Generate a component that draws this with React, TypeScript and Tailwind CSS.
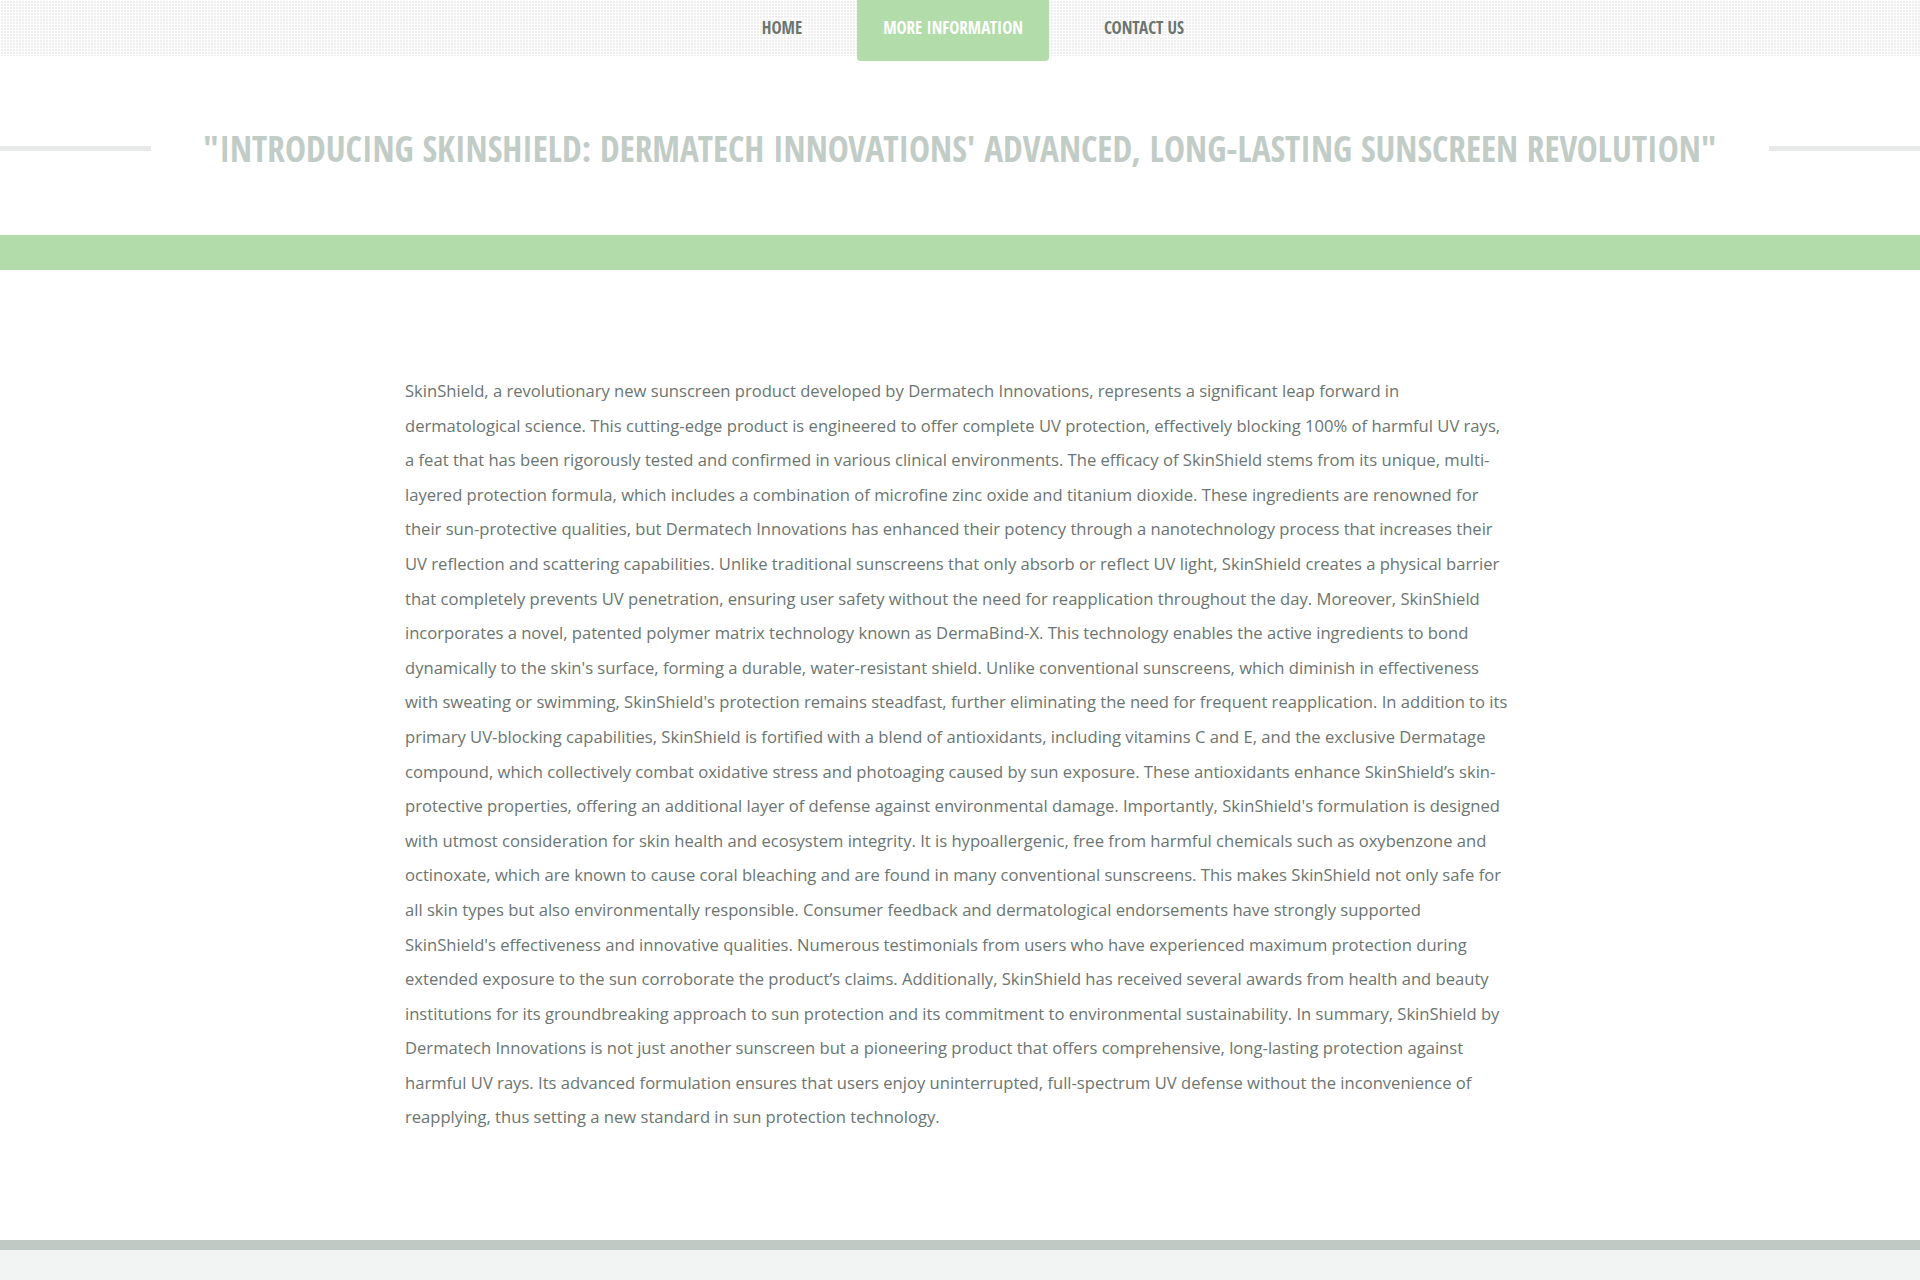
import React from "react";

const paragraph =
  "SkinShield, a revolutionary new sunscreen product developed by Dermatech Innovations, represents a significant leap forward in dermatological science. This cutting-edge product is engineered to offer complete UV protection, effectively blocking 100% of harmful UV rays, a feat that has been rigorously tested and confirmed in various clinical environments. The efficacy of SkinShield stems from its unique, multi-layered protection formula, which includes a combination of microfine zinc oxide and titanium dioxide. These ingredients are renowned for their sun-protective qualities, but Dermatech Innovations has enhanced their potency through a nanotechnology process that increases their UV reflection and scattering capabilities. Unlike traditional sunscreens that only absorb or reflect UV light, SkinShield creates a physical barrier that completely prevents UV penetration, ensuring user safety without the need for reapplication throughout the day. Moreover, SkinShield incorporates a novel, patented polymer matrix technology known as DermaBind-X. This technology enables the active ingredients to bond dynamically to the skin's surface, forming a durable, water-resistant shield. Unlike conventional sunscreens, which diminish in effectiveness with sweating or swimming, SkinShield's protection remains steadfast, further eliminating the need for frequent reapplication. In addition to its primary UV-blocking capabilities, SkinShield is fortified with a blend of antioxidants, including vitamins C and E, and the exclusive Dermatage compound, which collectively combat oxidative stress and photoaging caused by sun exposure. These antioxidants enhance SkinShield\u2019s skin-protective properties, offering an additional layer of defense against environmental damage. Importantly, SkinShield's formulation is designed with utmost consideration for skin health and ecosystem integrity. It is hypoallergenic, free from harmful chemicals such as oxybenzone and octinoxate, which are known to cause coral bleaching and are found in many conventional sunscreens. This makes SkinShield not only safe for all skin types but also environmentally responsible. Consumer feedback and dermatological endorsements have strongly supported SkinShield's effectiveness and innovative qualities. Numerous testimonials from users who have experienced maximum protection during extended exposure to the sun corroborate the product\u2019s claims. Additionally, SkinShield has received several awards from health and beauty institutions for its groundbreaking approach to sun protection and its commitment to environmental sustainability. In summary, SkinShield by Dermatech Innovations is not just another sunscreen but a pioneering product that offers comprehensive, long-lasting protection against harmful UV rays. Its advanced formulation ensures that users enjoy uninterrupted, full-spectrum UV defense without the inconvenience of reapplying, thus setting a new standard in sun protection technology.";

const condensed = "font-['Open_Sans_Condensed','Open_Sans',sans-serif] [font-stretch:75%] font-bold";

export default function App() {
  return (
    <div className="min-h-screen flex flex-col bg-white font-['Open_Sans',sans-serif]">
      <nav className="h-[56px] bg-[linear-gradient(90deg,#ffffff_1px,transparent_1px),linear-gradient(#ffffff_1px,#efefef_1px)] bg-[size:3px_3px]">
        <ul className={`flex justify-center items-start gap-[29px] pl-[26px] ${condensed} text-[17px] uppercase`}>
          <li className="h-[56px] px-[26px] flex items-center text-[#6a7570]">Home</li>
          <li className="h-[61px] px-[26px] pb-[5px] flex items-center bg-[#b2dcaa] text-white rounded-b-[4px]">More Information</li>
          <li className="h-[56px] px-[26px] flex items-center text-[#6a7570]">Contact Us</li>
        </ul>
      </nav>

      <header className="pt-[70px] pb-[65px] flex items-center">
        <div className="w-[151px] h-[5px] bg-[#e8eae9] shrink-0" />
        <h1 className={`mx-[52px] ${condensed} text-[35.3px] leading-[44px] text-[#c2ccc6] uppercase whitespace-nowrap`}>
          "Introducing SkinShield: Dermatech Innovations' Advanced, Long-Lasting Sunscreen Revolution"
        </h1>
        <div className="flex-1 h-[5px] bg-[#e8eae9]" />
      </header>

      <div className="h-[35px] bg-[#b2dcaa]" />

      <main className="pt-[104px] pb-[104px]">
        <div className="w-[1110px] mx-auto pr-[4px]">
          <p className="text-[16.6px] leading-[34.6px] text-[#6b7571]">{paragraph}</p>
        </div>
      </main>

      <footer className="mt-auto">
        <div className="h-[10px] bg-[#c0c9c4]" />
        <div className="h-[30px] bg-[#f2f4f3]" />
      </footer>
    </div>
  );
}
